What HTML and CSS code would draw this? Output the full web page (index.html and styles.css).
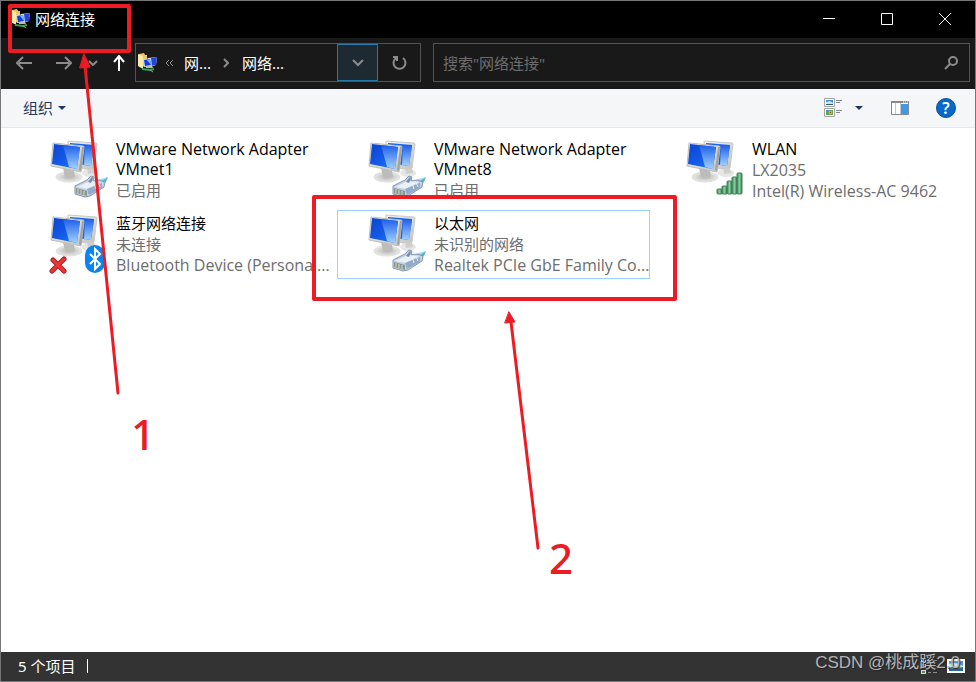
FILE: index.html
```html
<!DOCTYPE html>
<html lang="zh-CN">
<head>
    <meta charset="UTF-8">
    <title>网络连接</title>
    <link rel="stylesheet" href="styles.css">
</head>
<body>
    <!-- shared icons -->
    <svg class="sprites" aria-hidden="true">
        <defs>
            <linearGradient id="screen" x1="0" y1="0" x2="1" y2="1">
                <stop offset="0" stop-color="#0a45cf"/>
                <stop offset="0.5" stop-color="#1458e8"/>
                <stop offset="1" stop-color="#1583ff"/>
            </linearGradient>
            <linearGradient id="shine" x1="0" y1="0" x2="0" y2="1">
                <stop offset="0" stop-color="#1c5fea"/>
                <stop offset="1" stop-color="#a3d2fd"/>
            </linearGradient>
            <linearGradient id="frame" x1="0" y1="0" x2="1" y2="1">
                <stop offset="0" stop-color="#f4f4f2"/>
                <stop offset="1" stop-color="#c2c2c0"/>
            </linearGradient>
            <radialGradient id="stand">
                <stop offset="0" stop-color="#b4b4b2"/>
                <stop offset="1" stop-color="#e9e9e8"/>
            </radialGradient>
            <linearGradient id="bars" x1="0" y1="0" x2="1" y2="0">
                <stop offset="0" stop-color="#3e8c5a"/>
                <stop offset="0.5" stop-color="#8ccb9f"/>
                <stop offset="1" stop-color="#2f7d4c"/>
            </linearGradient>
            <symbol id="monitors" viewBox="0 0 60 60">
                <ellipse cx="41" cy="33" rx="8" ry="4" fill="#e6e6e5"/>
                <path d="M38 27l7 1 1 5-7 1z" fill="#cfcfcd"/>
                <path d="M19 1l28 2q1 0 1 1l-3 24-9 1-16-4z" fill="url(#frame)" stroke="#c9c9c7"/>
                <path d="M21 3l24 2-3 21-7-1-14-4z" fill="#1d62e8"/>
                <path d="M36 5l9 1-3 20-7-1z" fill="url(#shine)"/>
                <ellipse cx="20" cy="37" rx="13" ry="5" fill="url(#stand)" stroke="#dededd"/>
                <path d="M14 28l11 3 1 6q-5 2-10 0z" fill="#bcbcba"/>
                <path d="M4 3l30 3q1 0 1 1l-3 25-30-6z" fill="url(#frame)" stroke="#bdbdbb"/>
                <path d="M33 7l2 0-3 24-2-1z" fill="#a2a29f"/>
                <path d="M5 4l26 3-3 22-25-5z" fill="url(#screen)"/>
                <path d="M14 5l17 2-3 22-8-2z" fill="url(#shine)"/>
            </symbol>
            <symbol id="plug" viewBox="0 0 60 60">
                <path d="M47 43l12-6-2 5-9 4z" fill="#53b4d8"/>
                <path d="M46 42l5-3 8-2-9 6z" fill="#a5e2f2"/>
                <path d="M26 46l12-6 4-4 3 1-1 4 6-1 6 2-1 5-14 9-5 1-10-3z" fill="#c3d1e2" stroke="#8399b6"/>
                <path d="M28 47l13-6 11 1-13 7z" fill="#e9f0f6"/>
                <path d="M38 49l15-6v5l-13 7z" fill="#92abc9"/>
                <path d="M39 42l4-5 1 1-2 5z" fill="#748dae"/>
                <path d="M27 48l11 3v5l-11-3z" fill="#8595a4"/>
                <path d="M29 49v4M32 50v4M35 51v4" stroke="#e1dc86"/>
                <path d="M45 43l2 6M49 42l2 5" stroke="#eaf2fa"/>
            </symbol>
            <symbol id="signal" viewBox="0 0 60 60">
                <g fill="url(#bars)" stroke="#3a8055">
                    <rect x="32" y="49" width="5" height="5" rx="1"/>
                    <rect x="37" y="46" width="5" height="8" rx="1"/>
                    <rect x="42" y="41" width="5" height="13" rx="1"/>
                    <rect x="47" y="37" width="5" height="17" rx="1"/>
                    <rect x="52" y="33" width="5" height="21" rx="1"/>
                </g>
            </symbol>
            <symbol id="bluetooth" viewBox="0 0 60 60">
                <rect x="36" y="31" width="20" height="28" rx="10" fill="#0a84f5"/>
                <path d="M41 40l10 10-5 5V35l5 5-10 10" fill="none" stroke="#fff" stroke-width="2"/>
            </symbol>
            <symbol id="cross" viewBox="0 0 60 60">
                <path d="M4 46l11 11M15 45L3 57" stroke="#b3191c" stroke-width="5" stroke-linecap="round"/>
                <path d="M4 46l11 11M15 45L3 57" stroke="#e5393a" stroke-width="3" stroke-linecap="round"/>
            </symbol>
            <symbol id="netfolder" viewBox="0 0 20 20">
                <path d="M1 1l5-1 1 2 2 0v11l-8 1z" fill="#e9c766"/>
                <path d="M0 1l5 2v13l-5-3z" fill="#fbe9a8"/>
                <path d="M10 5l9-1-1 8-6 2-3-1z" fill="#dfe3ea"/>
                <path d="M13 5l6-1-1 8-5 1z" fill="#2346d6"/>
                <path d="M5 6l8-1 1 8-8 1z" fill="#d3d8e4"/>
                <path d="M6 7l6-1 1 6-6 1z" fill="#143fe0"/>
                <path d="M9 7l3-1 1 6z" fill="#7db4ff"/>
                <path d="M8 13h6l1 2H8z" fill="#b9bcc2"/>
                <path d="M4 16l8 1 4-1" fill="none" stroke="#2cab4c" stroke-width="2"/>
                <path d="M12 17l3 2" fill="none" stroke="#9aa39c" stroke-width="1"/>
            </symbol>
            <symbol id="thumb" viewBox="0 0 18 14">
                <path d="M0 0h18v14H0z" fill="#fff"/>
                <path d="M2 2h14v10H2z" fill="#4b9ae0"/>
                <path d="M2 5q7-3 14 2v3H2z" fill="#c8e8f9"/>
                <path d="M2 9q4-2 8 0l6-1v4H2z" fill="#35775d"/>
                <path d="M2 10h14v2H2z" fill="#2a62ad"/>
            </symbol>
        </defs>
    </svg>

    <div class="window">
        <header class="titlebar">
            <svg class="app-icon"><use href="#netfolder"/></svg>
            <h1>网络连接</h1>
            <div class="window-buttons">
                <button aria-label="最小化"><svg viewBox="0 0 12 12"><path d="M0 5.500h12"/></svg></button>
                <button aria-label="最大化"><svg viewBox="0 0 12 12"><path d="M.5.5h11v11H.5z"/></svg></button>
                <button aria-label="关闭"><svg viewBox="0 0 12 12"><path d="M0 0l12 12M12 0L0 12"/></svg></button>
            </div>
        </header>

        <nav class="navbar">
            <button class="nav-btn" aria-label="后退"><svg width="16" height="14" viewBox="0 0 16 14"><path d="M16 7H1M7 1L1 7l6 6"/></svg></button>
            <button class="nav-btn" aria-label="前进"><svg width="16" height="14" viewBox="0 0 16 14"><path d="M0 7h15M9 1l6 6-6 6"/></svg></button>
            <button class="nav-btn recent" aria-label="最近浏览的位置"><svg width="10" height="6" viewBox="0 0 10 6"><path d="M1 1l4 4 4-4"/></svg></button>
            <button class="nav-btn up" aria-label="上移"><svg width="12" height="16" viewBox="0 0 12 16"><path d="M6 16V1M1 7l5-6 5 6"/></svg></button>

            <div class="address">
                <svg class="app-icon"><use href="#netfolder"/></svg>
                <svg class="more" width="9" height="8" viewBox="0 0 9 8"><path d="M4 1L1 4l3 3M8 1L5 4l3 3"/></svg>
                <a href="#">网...</a>
                <svg class="sep" width="6" height="10" viewBox="0 0 6 10"><path d="M1 1l4 4-4 4"/></svg>
                <a href="#">网络...</a>
                <button class="drop" aria-label="历史记录"><svg width="12" height="8" viewBox="0 0 12 8"><path d="M1 1l5 5 5-5"/></svg></button>
                <button class="refresh" aria-label="刷新"><svg width="16" height="16" viewBox="0 0 16 16"><path d="M11 3a6 6 0 1 1-7 0M1 2h4v4"/></svg></button>
            </div>

            <div class="search">
                <input type="text" aria-label="搜索" placeholder='搜索"网络连接"'>
                <button aria-label="开始搜索"><svg width="14" height="14" viewBox="0 0 14 14"><circle cx="9" cy="5" r="4"/><path d="M6 8l-5 5"/></svg></button>
            </div>
        </nav>

        <div class="toolbar">
            <button class="organize">组织 <span class="caret"></span></button>
            <button class="tool" aria-label="更改视图">
                <svg width="19" height="20" viewBox="0 0 19 20">
                    <path d="M.5.5h10v8H.5zM.5 10.500h10v8H.5z" fill="#fff" stroke="#a3a5a8"/>
                    <path d="M2 2h7v5H2z" fill="#4c8ed0"/><path d="M2 4l4-1 3 2v1H2z" fill="#c7e5f5"/><path d="M2 6h7v1H2z" fill="#256068"/>
                    <path d="M2 12h7v5H2z" fill="#67a84b"/><path d="M2 12h3v2H2z" fill="#5590d5"/><path d="M5 13h3v3H5z" fill="#e1aa44"/><path d="M6 14h1v1H6z" fill="#bd3b2b"/>
                    <path d="M12 2.500h6M12 4.500h4M12 12.500h6M12 14.500h4" stroke="#85888c"/>
                </svg>
            </button>
            <button class="tool caret-btn" aria-label="更多选项"><span class="caret"></span></button>
            <button class="tool preview" aria-label="预览窗格">
                <svg width="18" height="14" viewBox="0 0 18 14">
                    <path d="M.5.5h17v13H.5z" fill="#fff" stroke="#85888c"/>
                    <path d="M0 0h18v2H0z" fill="#85888c"/><path d="M12 1h1M14 1h1M16 1h1" stroke="#fff"/>
                    <path d="M4.500 2v11M9.500 2v11" stroke="#c3c5c8"/><path d="M10 3h7v10h-7z" fill="#3f9ae5"/>
                </svg>
            </button>
            <button class="help" aria-label="帮助">?</button>
        </div>

        <main class="content">
            <ul class="tiles">
                <li class="tile">
                    <svg class="tile-icon"><use href="#monitors"/><use href="#plug"/></svg>
                    <div class="info">
                        <h2 class="latin">VMware Network Adapter VMnet1</h2>
                        <p>已启用</p>
                    </div>
                </li>
                <li class="tile">
                    <svg class="tile-icon"><use href="#monitors"/><use href="#plug"/></svg>
                    <div class="info">
                        <h2 class="latin">VMware Network Adapter VMnet8</h2>
                        <p>已启用</p>
                    </div>
                </li>
                <li class="tile">
                    <svg class="tile-icon"><use href="#monitors"/><use href="#signal"/></svg>
                    <div class="info">
                        <h2 class="latin">WLAN</h2>
                        <p class="latin">LX2035</p>
                        <p class="latin">Intel(R) Wireless-AC 9462</p>
                    </div>
                </li>
                <li class="tile">
                    <svg class="tile-icon"><use href="#monitors"/><use href="#cross"/><use href="#bluetooth"/></svg>
                    <div class="info">
                        <h2>蓝牙网络连接</h2>
                        <p>未连接</p>
                        <p class="latin">Bluetooth Device (Personal...</p>
                    </div>
                </li>
                <li class="tile focused">
                    <svg class="tile-icon"><use href="#monitors"/><use href="#plug"/></svg>
                    <div class="info">
                        <h2>以太网</h2>
                        <p>未识别的网络</p>
                        <p class="latin">Realtek PCIe GbE Family Co...</p>
                    </div>
                </li>
            </ul>
        </main>

        <footer class="statusbar">
            <span class="count">5 个项目</span>
            <button class="view" aria-label="详细信息">
                <svg width="16" height="16" viewBox="0 0 16 16">
                    <path d="M0 0h5v4H0zM0 6h5v4H0zM0 12h5v4H0z" fill="#ddd"/>
                    <path d="M1 1h3v2H1z" fill="#4b79b0"/><path d="M1 7h3v2H1z" fill="#a96c4a"/><path d="M1 13h3v2H1z" fill="#5c8a5c"/>
                    <path d="M7 2.500h3M12 2.500h4M7 8.500h3M12 8.500h4M7 14.500h3M12 14.500h4" stroke="#8b8b8b"/>
                </svg>
            </button>
            <button class="view" aria-label="大图标"><svg width="18" height="14"><use href="#thumb"/></svg></button>
            <span class="watermark">CSDN @桃成蹊2.0</span>
        </footer>
    </div>

    <!-- red step marks drawn over the window -->
    <svg class="marks" width="976" height="682" viewBox="0 0 976 682">
        <rect x="10" y="6" width="119" height="45"/>
        <path d="M118 393L85 66"/>
        <path class="head" d="M84 54l6 13-10 1z"/>
        <rect x="314" y="197" width="361" height="102"/>
        <path d="M538 548L511 322"/>
        <path class="head" d="M509 312l6 10-10 1z"/>
        <text x="131" y="450">1</text>
        <text x="549" y="574">2</text>
    </svg>
</body>
</html>
```

FILE: styles.css
```css
* {
    box-sizing: border-box;
}

body {
    margin: 0;
    font-family: "Noto Sans", "Noto Sans CJK SC", sans-serif;
    font-size: 15px;
    line-height: 20px;
}

button {
    display: flex;
    align-items: center;
    justify-content: center;
    padding: 0;
    border: none;
    background: none;
    font: inherit;
    cursor: pointer;
}

h1, h2, p, ul {
    margin: 0;
    padding: 0;
    font-size: 15px;
    font-weight: normal;
}

svg {
    display: block;
    flex-shrink: 0;
}

.sprites {
    position: absolute;
    width: 0;
    height: 0;
}

.window {
    display: flex;
    flex-direction: column;
    min-height: 100vh;
    border: 1px solid #747677;
    background: #fff;
}

.app-icon {
    width: 20px;
    height: 20px;
}

/* title bar */
.titlebar {
    display: flex;
    align-items: center;
    gap: 4px;
    height: 37px;
    padding: 0 1px 2px 10px;
    background: #000;
    color: #fff;
}

.window-buttons {
    display: flex;
    margin-left: auto;
}

.window-buttons button {
    width: 58px;
    height: 35px;
}

.window-buttons svg {
    width: 12px;
    height: 12px;
    fill: none;
    stroke: #fff;
}

/* navigation */
.navbar {
    display: flex;
    align-items: center;
    height: 51px;
    padding: 0 5px 2px 3px;
    background: #191919;
}

.navbar svg {
    fill: none;
    stroke: #8c8c8c;
    stroke-width: 2;
}

.navbar .app-icon {
    stroke: none;
}

.nav-btn {
    width: 40px;
    height: 36px;
}

.nav-btn.recent {
    width: 18px;
}

.nav-btn.up {
    width: 33px;
}

.nav-btn.up svg {
    stroke: #fff;
}

.address {
    display: flex;
    align-items: center;
    width: 286px;
    height: 39px;
    margin-right: 12px;
    padding-left: 2px;
    border: 1px solid #535353;
}

.address a {
    color: #fff;
    text-decoration: none;
}

.address .more {
    margin: 0 10px 0 7px;
    stroke-width: 1;
}

.address .sep {
    margin: 0 13px 0 12px;
}

.address .drop {
    width: 41px;
    height: 37px;
    margin-left: auto;
    border: 1px solid #2478a8;
    background: #1d2a31;
}

.address .refresh {
    width: 42px;
    height: 37px;
    padding-left: 2px;
}

.search {
    display: flex;
    flex: 1;
    height: 39px;
    border: 1px solid #535353;
}

.search input {
    flex: 1;
    min-width: 0;
    padding: 0 9px;
    border: none;
    outline: none;
    background: none;
    color: #fff;
    font: inherit;
}

.search input::placeholder {
    color: #6d6d6d;
}

.search button {
    width: 36px;
}

/* command bar */
.toolbar {
    display: flex;
    align-items: center;
    height: 39px;
    padding: 0 19px 0 22px;
    border-bottom: 1px solid #e5e8eb;
    background: #f5f6f7;
}

.organize {
    gap: 5px;
    margin-right: auto;
    color: #1e395b;
}

.caret {
    border: 4px solid transparent;
    border-top-color: #1e395b;
    border-bottom: none;
}

.tool {
    height: 28px;
}

.caret-btn {
    width: 32px;
}

.preview {
    width: 50px;
}

.help {
    width: 20px;
    height: 20px;
    margin-left: 11px;
    border: 1px solid #0a4f96;
    border-radius: 50%;
    background: #0969c8;
    color: #fff;
    font-size: 16px;
    font-weight: 600;
}

/* adapters */
.content {
    flex: 1;
    padding: 8px 0 8px 18px;
}

.tiles {
    display: grid;
    grid-template-columns: repeat(auto-fill, 313px);
    gap: 5px;
    list-style: none;
}

.tile {
    display: flex;
    gap: 7px;
    min-height: 69px;
    padding: 2px 5px 2px 29px;
    border: 1px solid transparent;
}

.tile.focused {
    border-color: #99d1ff;
}

.tile-icon {
    width: 60px;
    height: 60px;
    margin-top: 1px;
}

.info {
    flex: 1;
    min-width: 0;
}

.info h2 {
    margin-bottom: 1px;
    color: #000;
}

.info p {
    color: #6d6d6d;
    line-height: 21px;
    white-space: nowrap;
}

.info .latin {
    font-family: "Open Sans", sans-serif;
    font-size: 16px;
}

/* status bar */
.statusbar {
    position: relative;
    display: flex;
    align-items: center;
    gap: 10px;
    height: 29px;
    padding: 0 10px 2px 17px;
    background: #333;
    color: #fff;
}

.count {
    margin-right: auto;
    padding-right: 12px;
    border-right: 1px solid #fff;
    line-height: 14px;
}

.watermark {
    position: absolute;
    right: 15px;
    top: 1px;
    color: #b4b4b4;
    font-family: "Liberation Sans", "Noto Sans CJK SC", sans-serif;
    font-size: 17px;
    text-shadow: 1px 1px 1px #222;
}

/* step marks */
.marks {
    position: absolute;
    top: 0;
    left: 0;
    fill: none;
    stroke: #ed1c24;
    stroke-width: 3;
    stroke-linecap: round;
    stroke-linejoin: round;
    pointer-events: none;
}

.marks rect {
    stroke-width: 4;
}

.marks .head {
    fill: #ed1c24;
    stroke-width: 1;
}

.marks text {
    fill: #ed1c24;
    stroke: none;
    font-family: "Noto Sans", sans-serif;
    font-size: 42px;
    font-weight: 500;
}
```
